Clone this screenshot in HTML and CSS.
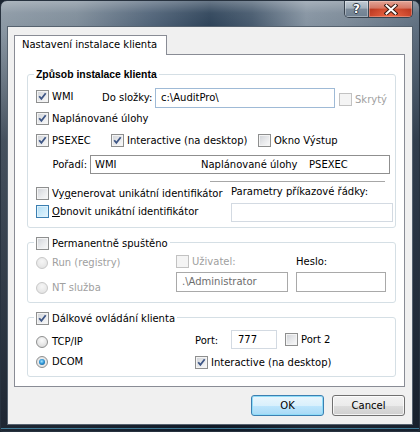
FILE: index.html
```html
<!DOCTYPE html>
<html>
<head>
<meta charset="utf-8">
<link rel="stylesheet" href="styles.css">
</head>
<body>
<div class="window">
  <div class="titlebar">
    <div class="caption">
      <div class="cap-btn help"><span>?</span></div>
      <div class="cap-btn close"><svg width="14" height="11" viewBox="0 0 14 11"><path d="M2.5 1.5 L11.5 9.5 M11.5 1.5 L2.5 9.5" stroke="#3b1a12" stroke-width="4" stroke-linecap="square"/><path d="M2.5 1.5 L11.5 9.5 M11.5 1.5 L2.5 9.5" stroke="#fff" stroke-width="2" stroke-linecap="square"/></svg></div>
    </div>
  </div>
  <div class="client">
    <div class="tabstrip"><div class="tab">Nastavení instalace klienta</div></div>
    <div class="panel">
      <div class="group g1">
        <div class="legend bold">Způsob instalace klienta</div>
        <div class="row r1">
          <label class="cb w-wmi"><span class="box"><svg viewBox="0 0 11 11"><path d="M2.2 5.2 L4.4 7.9 L8.7 2.3"/></svg></span><span>WMI</span></label>
          <span class="lbl dir">Do složky:</span>
          <div class="input path">c:\AuditPro\</div>
          <label class="cb dis skryty"><span class="box"></span><span>Skrytý</span></label>
        </div>
        <div class="row r2">
          <label class="cb"><span class="box"><svg viewBox="0 0 11 11"><path d="M2.2 5.2 L4.4 7.9 L8.7 2.3"/></svg></span><span>Naplánované úlohy</span></label>
        </div>
        <div class="row r3">
          <label class="cb w-ps"><span class="box"><svg viewBox="0 0 11 11"><path d="M2.2 5.2 L4.4 7.9 L8.7 2.3"/></svg></span><span>PSEXEC</span></label>
          <label class="cb w-int"><span class="box"><svg viewBox="0 0 11 11"><path d="M2.2 5.2 L4.4 7.9 L8.7 2.3"/></svg></span><span>Interactive (na desktop)</span></label>
          <label class="cb"><span class="box"></span><span>Okno Výstup</span></label>
        </div>
        <div class="row r4">
          <span class="lbl order-lbl">Pořadí:</span>
          <div class="order"><span class="o1">WMI</span><span class="o2">Naplánované úlohy</span><span>PSEXEC</span></div>
        </div>
        <div class="sep"></div>
        <div class="row r5">
          <div class="col-left">
            <label class="cb"><span class="box"></span><span>Vy<u>g</u>enerovat unikátní identifikátor</span></label>
            <label class="cb hover"><span class="box"></span><span><u>O</u>bnovit unikátní identifikátor</span></label>
          </div>
          <div class="col-right">
            <span class="lbl">Parametry příkazové řádky:</span>
            <div class="input light params"></div>
          </div>
        </div>
      </div>

      <div class="group g2">
        <label class="legend cb"><span class="box"></span><span>Permanentně spuštěno</span></label>
        <div class="row r6">
          <div class="c-radio">
            <label class="rb dis run"><span class="circle"></span><span>Run (registry)</span></label>
            <label class="rb dis nt"><span class="circle"></span><span>NT služba</span></label>
          </div>
          <div class="c-user">
            <label class="cb dis"><span class="box"></span><span>Uživatel:</span></label>
            <div class="input gray user">.\Administrator</div>
          </div>
          <div class="c-pass">
            <span class="lbl">Heslo:</span>
            <div class="input gray pass"></div>
          </div>
        </div>
      </div>

      <div class="group g3">
        <label class="legend cb"><span class="box"><svg viewBox="0 0 11 11"><path d="M2.2 5.2 L4.4 7.9 L8.7 2.3"/></svg></span><span>Dálkové ovládání klienta</span></label>
        <div class="row r7">
          <label class="rb w-radio tcp"><span class="circle"></span><span>TCP/IP</span></label>
          <span class="lbl port-lbl">Port:</span>
          <div class="input light port">777</div>
          <label class="cb port2"><span class="box"></span><span>Port 2</span></label>
        </div>
        <div class="row r8">
          <label class="rb w-radio"><span class="circle on"><span class="dot"></span></span><span>DCOM</span></label>
          <label class="cb"><span class="box"><svg viewBox="0 0 11 11"><path d="M2.2 5.2 L4.4 7.9 L8.7 2.3"/></svg></span><span>Interactive (na desktop)</span></label>
        </div>
      </div>
    </div>
    <div class="buttons">
      <button class="btn default">OK</button>
      <button class="btn">Cancel</button>
    </div>
  </div>
</div>
</body>
</html>
```

FILE: styles.css
```css
* { box-sizing: border-box; }
html, body { margin: 0; padding: 0; }
body {
  width: 420px;
  height: 432px;
  overflow: hidden;
  background: #1a2430;
  font-family: "DejaVu Sans", Verdana, sans-serif;
  font-size: 10px;
  color: #000;
}

.window {
  width: 420px;
  height: 432px;
  border: 1px solid #27323f;
  border-radius: 7px 7px 3px 3px;
  overflow: hidden;
  display: flex;
  flex-direction: column;
  background:
    linear-gradient(to top, rgba(0,0,0,0) 0, rgba(0,0,0,0) 2px, rgba(95,195,235,0.55) 2px, rgba(95,195,235,0.55) 3px, rgba(0,0,0,0) 3px),
    linear-gradient(to bottom, rgba(255,255,255,0.28) 0, rgba(255,255,255,0.05) 12px, rgba(255,255,255,0) 25px),
    linear-gradient(to bottom, rgba(12,22,36,0) 0, rgba(12,22,36,0) 26px, rgba(12,22,36,0.55) 140px, rgba(10,18,30,0.85) 100%),
    linear-gradient(to right, #8c99a5 0%, #7f8d9a 18%, #506378 36%, #2f445a 50%, #475a6e 60%, #8593a1 73%, #7d8b99 82%, #5f6f80 100%);
}

.titlebar {
  height: 25px;
  flex: none;
  display: flex;
  justify-content: flex-end;
  align-items: flex-start;
  padding-right: 6px;
}
.caption {
  display: flex;
  height: 17px;
  border: 1px solid #36414d;
  border-top: none;
  border-radius: 0 0 5px 5px;
  overflow: hidden;
}
.cap-btn {
  height: 16px;
  display: flex;
  align-items: center;
  justify-content: center;
}
.help {
  width: 24px;
  border-right: 1px solid #3b4652;
  background: linear-gradient(to bottom, #c3ccd5 0%, #a2afbb 45%, #7d8c9b 50%, #6f8091 100%);
  box-shadow: inset 0 0 0 1px rgba(255,255,255,0.35);
}
.help span {
  color: #fff;
  font-family: "DejaVu Sans", sans-serif;
  font-weight: bold;
  font-size: 12px;
  line-height: 12px;
  text-shadow: 1px 0 #2d3844, -1px 0 #2d3844, 0 1px #2d3844, 0 -1px #2d3844;
}
.close {
  width: 43px;
  background:
    radial-gradient(ellipse at 50% 100%, rgba(255,120,80,0.7) 0, rgba(255,120,80,0) 70%),
    linear-gradient(to bottom, #e3a597 0%, #d17766 45%, #bd3a22 50%, #c9452c 100%);
  box-shadow: inset 0 0 0 1px rgba(255,220,210,0.35);
}

.client {
  flex: none;
  margin: 0 6px 6px;
  height: 399px;
  border: 1px solid #56626f;
  background: #f0f0f0;
  padding: 8px 0 0 6px;
}

.tabstrip { display: flex; height: 19px; }
.tab {
  position: relative;
  z-index: 1;
  width: 153px;
  height: 20px;
  border: 1px solid #898c95;
  border-bottom: none;
  background: #fff;
  padding-left: 7px;
  line-height: 18px;
  white-space: nowrap;
}
.panel {
  width: 391px;
  height: 333px;
  border: 1px solid #898c95;
  background: #fff;
  display: flex;
  flex-direction: column;
}

.group {
  margin-left: 12px;
  width: 369px;
  border: 1px solid #d5dfe5;
  border-radius: 3px;
  padding-left: 8px;
  display: flex;
  flex-direction: column;
  flex: none;
}
.g1 { margin-top: 19px; height: 154px; }
.g2 { margin-top: 14px; height: 61px; }
.g3 { margin-top: 14px; height: 60px; }

.legend {
  align-self: flex-start;
  background: #fff;
  padding: 0 2px;
  margin-left: -2px;
  height: 13px;
  line-height: 13px;
}
.g1 .legend { margin-top: -7px; }
.g2 .legend, .g3 .legend { margin-top: -6px; }
.bold { font-weight: bold; font-family: "Liberation Sans", Arial, sans-serif; font-size: 10.4px; }

.row { display: flex; align-items: flex-start; }
.lbl { line-height: 13px; white-space: nowrap; }

/* checkbox */
.cb {
  display: flex;
  align-items: center;
  gap: 3px;
  height: 13px;
  line-height: 13px;
  white-space: nowrap;
  flex: none;
}
.box {
  width: 13px;
  height: 13px;
  flex: none;
  border: 1px solid #8e8f8f;
  background: linear-gradient(135deg, #cfd2d7 0%, #e9eaec 55%, #fafafa 100%);
  box-shadow: inset 0 0 0 1px #f4f4f4;
  display: flex;
}
.box svg { width: 11px; height: 11px; }
.box svg path { fill: none; stroke: #3f5786; stroke-width: 1.8; }
.cb.dis { color: #a0a0a0; }
.cb.dis .box {
  border-color: #c2c2c2;
  background: #f4f4f4;
  box-shadow: none;
}
.cb.hover .box {
  border-color: #3c7fb1;
  background: linear-gradient(135deg, #b3ddf5 0%, #cdebfa 55%, #e6f5fd 100%);
  box-shadow: inset 0 0 0 1px #def2fc;
}

/* radio */
.rb {
  display: flex;
  align-items: center;
  gap: 4px;
  height: 12px;
  line-height: 12px;
  white-space: nowrap;
  flex: none;
}
.circle {
  width: 12px;
  height: 12px;
  flex: none;
  border-radius: 50%;
  border: 1px solid #8e8f8f;
  background: radial-gradient(circle at 50% 35%, #fbfbfb 0%, #e4e4e4 60%, #cfcfcf 100%);
  display: flex;
  align-items: center;
  justify-content: center;
}
.circle.on { background: radial-gradient(circle, #f6f6f6 0%, #dcdcdc 100%); }
.dot {
  width: 6px;
  height: 6px;
  border-radius: 50%;
  background: radial-gradient(circle at 45% 40%, #a6e4ff 0%, #3198d8 45%, #0f4373 100%);
}
.rb.dis { color: #a0a0a0; }
.rb.dis .circle {
  border-color: #c8c8c8;
  background: radial-gradient(circle at 50% 35%, #f6f6f6 0%, #e6e6e6 70%, #dadada 100%);
}

/* inputs */
.input {
  flex: none;
  border: 1px solid #abadb3;
  background: #fff;
  padding-left: 5px;
  white-space: nowrap;
}
.input.light { border-color: #d3dae2; }
.input.gray { border-color: #a9a9a9; color: #6d6d6d; }

/* group 1 */
.r1 { margin-top: 7px; height: 20px; }
.w-wmi { width: 66px; margin-top: 2px; }
.dir { width: 53px; line-height: 20px; }
.path { width: 180px; height: 20px; line-height: 18px; border-color: #9fbad6; }
.skryty { margin-left: 4px; margin-top: 5px; }
.r2 { margin-top: 4px; }
.r3 { margin-top: 9px; }
.w-ps { width: 75px; }
.w-int { width: 147px; }
.r4 { margin-top: 8px; height: 19px; }
.order-lbl { width: 54px; text-align: right; padding-right: 3px; line-height: 19px; }
.order {
  width: 300px;
  height: 19px;
  border: 1px solid #8f8f8f;
  padding-left: 4px;
  line-height: 17px;
  display: flex;
  white-space: nowrap;
}
.o1 { width: 106px; }
.o2 { width: 108px; }
.sep {
  margin-top: 7px;
  margin-left: 174px;
  width: 175px;
  height: 1px;
  background: #a7a7a7;
  flex: none;
}
.col-left { width: 195px; padding-top: 5px; display: flex; flex-direction: column; gap: 5px; }
.col-right { padding-top: 3px; display: flex; flex-direction: column; }
.params { width: 162px; height: 19px; margin-top: 5px; }

/* group 2 */
.r6 { margin-top: 5px; }
.c-radio { width: 140px; padding-top: 2px; display: flex; flex-direction: column; }
.nt { margin-top: 13px; }
.c-user { width: 112px; display: flex; flex-direction: column; }
.user { width: 112px; height: 20px; margin-top: 4px; line-height: 18px; }
.c-pass { margin-left: 8px; display: flex; flex-direction: column; }
.pass { width: 90px; height: 20px; margin-top: 4px; }

/* group 3 */
.r7 { margin-top: 5px; height: 19px; }
.w-radio { width: 159px; }
.tcp { margin-top: 6px; }
.port-lbl { width: 36px; margin-top: 4px; }
.port { width: 46px; height: 19px; line-height: 17px; padding-left: 6px; }
.port2 { margin-left: 8px; margin-top: 3px; }
.r8 { margin-top: 7px; }

/* buttons */
.buttons {
  width: 391px;
  margin-top: 8px;
  display: flex;
  justify-content: flex-end;
  gap: 8px;
}
.btn {
  width: 73px;
  height: 21px;
  padding: 0;
  border: 1px solid #707070;
  border-radius: 3px;
  font-family: "DejaVu Sans", Verdana, sans-serif;
  font-size: 10px;
  color: #000;
  background: linear-gradient(to bottom, #f2f2f2 0%, #ebebeb 50%, #dddddd 50%, #cfcfcf 100%);
  box-shadow: inset 0 0 0 1px rgba(255,255,255,0.75);
}
.btn.default {
  border-color: #3c7fb1;
  background: linear-gradient(to bottom, #eaf6fd 0%, #d9f0fc 50%, #bee6fd 50%, #a7d9f5 100%);
  box-shadow: inset 0 0 0 1px #8fdcf8;
}
```
